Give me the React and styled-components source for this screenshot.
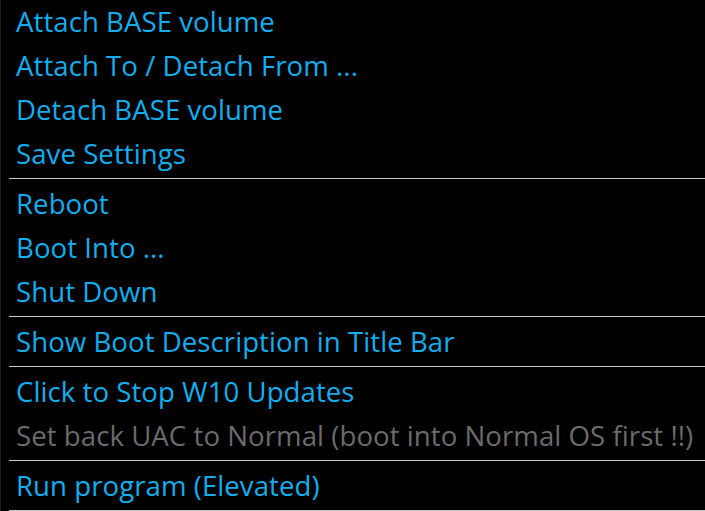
import styled, { createGlobalStyle } from "styled-components";

const GlobalStyle = createGlobalStyle`
  html, body {
    margin: 0;
    padding: 0;
    background: #000;
  }
`;

const Menu = styled.div`
  width: 705px;
  height: 511px;
  box-sizing: border-box;
  background: #000;
  border-left: 1px solid #1e1e1e;
  overflow: hidden;
  font-family: "Open Sans", "Noto Sans", sans-serif;
`;

const Item = styled.div`
  height: 44px;
  line-height: 42px;
  padding-left: 15px;
  font-size: 27.6px;
  letter-spacing: 0.05px;
  white-space: nowrap;
  color: ${(p) => (p.disabled ? "#6b6b6b" : "#12aeee")};
  cursor: ${(p) => (p.disabled ? "default" : "pointer")};
`;

const Separator = styled.div`
  height: 6px;
  padding-left: 8px;
  box-sizing: border-box;
  padding-top: 2px;

  &::after {
    content: "";
    display: block;
    height: 1px;
    background: #c8c8c8;
  }
`;

const groups = [
  [
    { label: "Attach BASE volume" },
    { label: "Attach To / Detach From ..." },
    { label: "Detach BASE volume" },
    { label: "Save Settings" },
  ],
  [{ label: "Reboot" }, { label: "Boot Into ..." }, { label: "Shut Down" }],
  [{ label: "Show Boot Description in Title Bar" }],
  [
    { label: "Click to Stop W10 Updates" },
    { label: "Set back UAC to Normal (boot into Normal OS first !!)", disabled: true },
  ],
  [{ label: "Run program (Elevated)" }],
];

export default function App() {
  return (
    <>
      <GlobalStyle />
      <Menu>
        {groups.map((group, i) => (
          <div key={i}>
            {group.map((item) => (
              <Item key={item.label} disabled={item.disabled}>
                {item.label}
              </Item>
            ))}
            <Separator />
          </div>
        ))}
      </Menu>
    </>
  );
}
